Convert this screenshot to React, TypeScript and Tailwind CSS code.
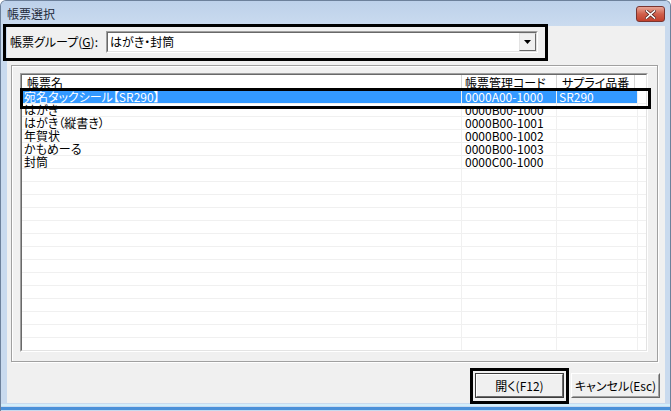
const rows = [
  { name: "宛名タックシール【SR290】", code: "0000A00-1000", supply: "SR290" },
  { name: "はがき", code: "0000B00-1000", supply: "" },
  { name: "はがき（縦書き）", code: "0000B00-1001", supply: "" },
  { name: "年賀状", code: "0000B00-1002", supply: "" },
  { name: "かもめーる", code: "0000B00-1003", supply: "" },
  { name: "封筒", code: "0000C00-1000", supply: "" },
];

const filler = Array.from({ length: 16 }, (_, i) => i);

function CloseButton() {
  return (
    <div className="mt-[5px] self-start flex h-[16px] w-[29px] items-center justify-center rounded-[3px] border border-[#7a3530] bg-gradient-to-b from-[#e7a596] via-[#d0604c] to-[#c2402c]">
      <svg width="11" height="9" viewBox="0 0 11 9">
        <path d="M1.5 1 L9.5 8 M9.5 1 L1.5 8" stroke="#5a2a25" strokeWidth="3" strokeLinecap="square" />
        <path d="M1.5 1 L9.5 8 M9.5 1 L1.5 8" stroke="#ffffff" strokeWidth="1.6" strokeLinecap="square" />
      </svg>
    </div>
  );
}

export default function App() {
  return (
    <div className="relative flex h-[411px] w-[671px] flex-col overflow-hidden rounded-t-[6px] border-x border-t border-[#6d819b] bg-[#c9daee] font-['Noto_Sans_CJK_JP','Noto_Sans_CJK_SC',sans-serif] text-[12px] leading-none text-black [font-feature-settings:'palt']">
      {/* title bar */}
      <div className="flex h-[25px] items-center justify-between bg-gradient-to-b from-[#bdd1ea] to-[#cadbef] pl-[6px] pr-[5px]">
        <span className="text-[#1e2a3a]">帳票選択</span>
        <CloseButton />
      </div>

      {/* client area */}
      <div className="ml-[6px] flex h-[377px] w-[658px] flex-col bg-[#f0f0f0]">
        {/* group selector */}
        <div className="flex items-center pl-[3px] pt-[5px]">
          <div className="w-[96px]">
            帳票グループ(<span className="underline">G</span>):
          </div>
          <div className="h-[22px] w-[432px] border border-t-[#a0a0a0] border-l-[#a0a0a0] border-r-white border-b-white">
            <div className="flex h-full items-center border border-t-[#696969] border-l-[#696969] border-r-[#e3e3e3] border-b-[#e3e3e3] bg-white">
              <span className="flex-1 pl-[2px]">はがき・封筒</span>
              <div className="flex h-full w-[17px] items-center justify-center border border-t-[#e3e3e3] border-l-[#e3e3e3] border-r-[#696969] border-b-[#696969] bg-[#f0f0f0]">
                <svg width="7" height="4" viewBox="0 0 7 4">
                  <path d="M0 0 H7 L3.5 4 Z" fill="#000" />
                </svg>
              </div>
            </div>
          </div>
        </div>

        {/* panel */}
        <div className="ml-[4px] mt-[12px] h-[297px] w-[647px] border border-[#a0a0a0] pl-[8px] pt-[7px] shadow-[1px_1px_0_#ffffff,inset_1px_1px_0_#ffffff]">
          <div className="h-[279px] w-[628px] border border-t-[#a0a0a0] border-l-[#a0a0a0] border-r-white border-b-white">
            <div className="h-full overflow-hidden border border-t-[#696969] border-l-[#696969] border-r-[#e3e3e3] border-b-[#e3e3e3] bg-white">
              {/* header */}
              <div className="flex h-[16px] items-center border-b border-[#d5d5d5]">
                <div className="flex h-full w-[440px] items-center border-r border-[#d5d5d5] pl-[5px]">帳票名</div>
                <div className="flex h-full w-[95px] items-center border-r border-[#d5d5d5] pl-[3px]">帳票管理コード</div>
                <div className="flex h-full w-[78px] items-center border-r border-[#d5d5d5] pl-[5px]">サプライ品番</div>
                <div className="h-full flex-1" />
              </div>
              {/* rows */}
              {rows.map((r, i) => {
                const sel = i === 0;
                const cell = sel ? "bg-[#3399ff] text-white" : "";
                return (
                  <div key={r.code} className="flex h-[13px] border-b border-[#f0f0f0]">
                    <div className={`flex h-full w-[440px] items-center border-r border-[#f0f0f0] pl-[2px] ${cell}`}>{r.name}</div>
                    <div className={`flex h-full w-[95px] items-center border-r border-[#f0f0f0] pl-[3px] ${cell}`}>{r.code}</div>
                    <div className={`flex h-full w-[81px] items-center border-r border-[#f0f0f0] pl-[2px] ${cell}`}>{r.supply}</div>
                    <div className="h-full flex-1" />
                  </div>
                );
              })}
              {filler.map((i) => (
                <div key={i} className="flex h-[13px] border-b border-[#f0f0f0]">
                  <div className="h-full w-[440px] border-r border-[#f0f0f0]" />
                  <div className="h-full w-[95px] border-r border-[#f0f0f0]" />
                  <div className="h-full w-[81px] border-r border-[#f0f0f0]" />
                  <div className="h-full flex-1" />
                </div>
              ))}
            </div>
          </div>
        </div>

        {/* buttons */}
        <div className="mt-[11px] flex justify-end gap-[7px] pr-[5px]">
          <div className="h-[25px] w-[89px] border border-[#3c3c3c]">
            <div className="flex h-full items-center justify-center border border-t-white border-l-white border-r-[#696969] border-b-[#696969] bg-[#f0f0f0]">
              開く(F12)
            </div>
          </div>
          <div className="h-[25px] w-[89px] border border-t-white border-l-white border-r-[#696969] border-b-[#696969]">
            <div className="flex h-full items-center justify-center border border-t-[#f0f0f0] border-l-[#f0f0f0] border-r-[#a0a0a0] border-b-[#a0a0a0] bg-[#f0f0f0]">
              キャンセル(Esc)
            </div>
          </div>
        </div>
      </div>

      {/* bottom frame */}
      <div className="mt-[1px] h-[2px] bg-[#d2eefb]" />
      <div className="mt-[1px] h-[3px] bg-[#4a90d9]" />

      {/* annotation frames */}
      <div className="absolute left-[2px] top-[23px] h-[37px] w-[545px] border-[3px] border-black" />
      <div className="absolute left-[19px] top-[87px] h-[21px] w-[631px] border-[3px] border-black" />
      <div className="absolute left-[469px] top-[367px] h-[36px] w-[99px] border-[3px] border-black" />
    </div>
  );
}
